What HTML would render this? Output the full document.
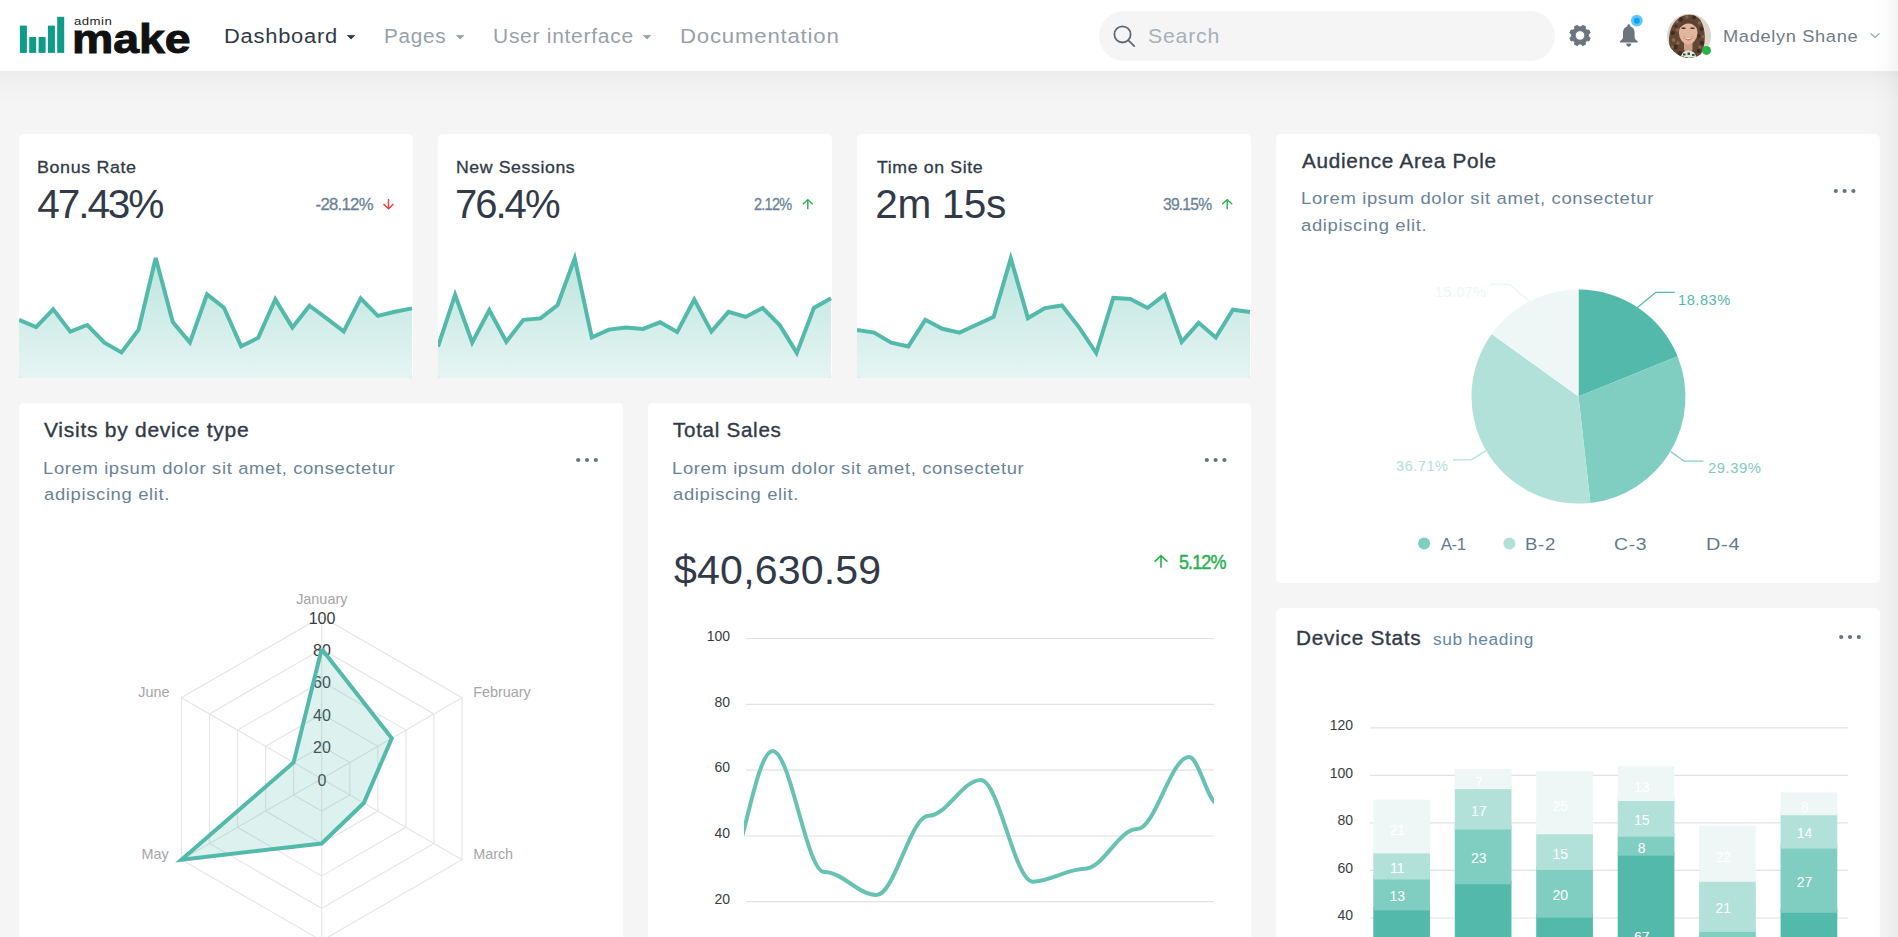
<!DOCTYPE html>
<html lang="en">
<head>
<meta charset="utf-8">
<title>Admin Make - Dashboard</title>
<style>
html,body{margin:0;padding:0;}
html{width:1898px;height:937px;overflow:hidden;}
body{width:1898px;height:937px;overflow:hidden;position:relative;background:#f5f5f5;
  font-family:"Liberation Sans",sans-serif;color:#313a46;}
.t{position:absolute;white-space:nowrap;line-height:1;transform-origin:0 50%;display:block;}
.topbar{position:absolute;left:0;top:0;width:1898px;height:71px;background:#fff;z-index:5;}
.topshadow{position:absolute;left:0;top:71px;width:1898px;height:34px;
  background:linear-gradient(to bottom,rgba(0,0,0,.042),rgba(0,0,0,.014) 38%,rgba(0,0,0,0));}
.edgeshadow{position:absolute;right:0;top:0;width:30px;height:937px;z-index:9;
  background:linear-gradient(to left,rgba(0,0,0,.042),rgba(0,0,0,.013) 45%,rgba(0,0,0,0));}
.card{position:absolute;background:#fff;border-radius:5px;}
.card svg,.topbar svg{position:absolute;left:0;top:0;display:block;}
.search{position:absolute;left:1099px;top:11px;width:456px;height:50px;border-radius:25px;background:#f5f5f5;}
</style>
</head>
<body>
<div class="topshadow"></div>
<header class="topbar">
<svg width="1898" height="71" viewBox="0 0 1898 71">
<rect x="19.9" y="25.6" width="7" height="27.3" fill="#0e9c88"/>
<rect x="29.2" y="37.0" width="7" height="15.9" fill="#0e9c88"/>
<rect x="38.6" y="37.0" width="7" height="15.9" fill="#0e9c88"/>
<rect x="47.9" y="25.6" width="7" height="27.3" fill="#0e9c88"/>
<rect x="57.2" y="16.8" width="7" height="36.1" fill="#0e9c88"/>
<path d="M347.4 35.4h7.4l-3.7 3.6z" fill="#313a46" stroke="#313a46" stroke-width="0.8" stroke-linejoin="round"/>
<path d="M456.5 35.4h7.4l-3.7 3.6z" fill="#98a1a9" stroke="#98a1a9" stroke-width="0.8" stroke-linejoin="round"/>
<path d="M643.3 35.4h7.4l-3.7 3.6z" fill="#98a1a9" stroke="#98a1a9" stroke-width="0.8" stroke-linejoin="round"/>
</svg>
<span class="t" style="left:74.24px;top:16.30px;font-size:11.00px;color:#1c1c1c;letter-spacing:0.385px;transform:scaleX(1.2000);">admin</span>
<span class="t" style="left:72.28px;top:19.30px;font-size:40.60px;color:#111111;font-weight:700;transform:scaleX(1.1434);-webkit-text-stroke:1.0px #111111;">make</span>
<span class="t" style="left:224.25px;top:27.30px;font-size:19.60px;color:#313a46;letter-spacing:0.686px;transform:scaleX(1.1173);">Dashboard</span>
<span class="t" style="left:384.24px;top:27.30px;font-size:19.60px;color:#98a1a9;letter-spacing:0.686px;transform:scaleX(1.0579);">Pages</span>
<span class="t" style="left:493.43px;top:27.30px;font-size:19.60px;color:#98a1a9;letter-spacing:0.686px;transform:scaleX(1.0702);">User interface</span>
<span class="t" style="left:680.42px;top:27.30px;font-size:19.60px;color:#98a1a9;letter-spacing:0.686px;transform:scaleX(1.1337);">Documentation</span>
<div class="search"></div>
<span class="t" style="left:1148.44px;top:26.30px;font-size:20.80px;color:#a7b0b8;letter-spacing:0.728px;transform:scaleX(1.0254);">Search</span>
<span class="t" style="left:1723.24px;top:29.30px;font-size:16.90px;color:#707c87;letter-spacing:0.592px;transform:scaleX(1.0813);">Madelyn Shane</span>
<svg width="1898" height="71" viewBox="0 0 1898 71">
<circle cx="1122.5" cy="34.4" r="8.1" fill="none" stroke="#5d6a74" stroke-width="1.8"/><path d="M1128.4 40.4L1134.3 46.1" stroke="#5d6a74" stroke-width="1.8" stroke-linecap="round"/>
<path d="M1581.29 26.85 L1582.45 25.24 L1585.49 26.50 L1585.17 28.45 L1587.00 30.28 L1588.95 29.96 L1590.21 33.00 L1588.60 34.16 L1588.60 36.74 L1590.21 37.90 L1588.95 40.94 L1587.00 40.62 L1585.17 42.45 L1585.49 44.40 L1582.45 45.66 L1581.29 44.05 L1578.71 44.05 L1577.55 45.66 L1574.51 44.40 L1574.83 42.45 L1573.00 40.62 L1571.05 40.94 L1569.79 37.90 L1571.40 36.74 L1571.40 34.16 L1569.79 33.00 L1571.05 29.96 L1573.00 30.28 L1574.83 28.45 L1574.51 26.50 L1577.55 25.24 L1578.71 26.85Z M1584.75 35.45 a4.75 4.75 0 1 0 -9.5 0 a4.75 4.75 0 1 0 9.5 0Z" fill="#6c757d" fill-rule="evenodd" stroke="#6c757d" stroke-width="0.9" stroke-linejoin="round"/>
<path d="M1628.8 24.3c-.8 0-1.400 .6-1.400 1.400v.5c-2.700 .8-4.400 3.200-4.400 6.200v4.600c0 1.600-1.200 3-3.100 4.300v1.300h17.800v-1.300c-1.900-1.300-3.100-2.700-3.100-4.300v-4.600c0-3-1.700-5.400-4.400-6.200v-.5c0-.8-.6-1.400-1.400-1.400zM1626.200 43.500h5.200c0 1.800-1.200 3.200-2.600 3.200s-2.600-1.400-2.600-3.200z" fill="#6c757d"/>
<circle cx="1636.800" cy="20.700" r="5.900" fill="#5ec6f7"/><circle cx="1636.800" cy="20.700" r="3" fill="#06a5f3"/>
<defs><clipPath id="av"><circle cx="1689.100" cy="35.800" r="22"/></clipPath></defs>
<g clip-path="url(#av)">
<rect x="1666" y="13" width="46" height="46" fill="#ddd6ca"/>
<path d="M1676 59C1670 52 1668.300 44 1669.300 36C1670.300 27 1675 18.500 1684 15.500C1690 13.500 1697 15 1700.500 20C1703.500 25 1704.800 31 1704.800 37C1704.800 44 1703.500 50 1700.500 55L1698 59Z" fill="#634634"/>
<g fill="#3f2c22"><circle cx="1681" cy="19.500" r="2.200"/><circle cx="1694" cy="17.500" r="2"/><circle cx="1672.800" cy="33" r="2"/><circle cx="1675.500" cy="47" r="2.400"/><circle cx="1701.500" cy="29" r="2"/><circle cx="1702" cy="43" r="2.200"/><circle cx="1680" cy="53.500" r="2.200"/><circle cx="1698.500" cy="51" r="2"/><circle cx="1676" cy="26" r="1.600"/><circle cx="1699" cy="36" r="1.600"/></g>
<g fill="#8a634b"><circle cx="1677.500" cy="30" r="1.800"/><circle cx="1673.500" cy="40" r="2"/><circle cx="1687" cy="17" r="1.800"/><circle cx="1699.500" cy="23" r="1.800"/><circle cx="1703" cy="36.500" r="1.600"/><circle cx="1678" cy="43" r="1.800"/><circle cx="1672.500" cy="47" r="1.400"/><circle cx="1700" cy="47" r="1.600"/><circle cx="1677" cy="21.500" r="1.500"/></g>
<path d="M1684 41h8.500v9l-4.200 3-4.300-3z" fill="#cf9f86"/>
<ellipse cx="1688.200" cy="32.200" rx="9.300" ry="12.200" fill="#e2b59d"/>
<path d="M1679 29c.5-5.500 4-9.500 9.500-9.500 5 0 8.500 3.500 9 9.500-2.500-3.500-5.500-5.500-9-5.500-3.500 0-7 2-9.500 5.500z" fill="#5d4233"/>
<path d="M1681.500 28.300h4M1690.500 28.300h4" stroke="#4b362c" stroke-width="1.400"/>
<path d="M1683.600 36.300c3 1.200 6.300 1.200 9.300 0-.8 2.700-2.500 4.200-4.600 4.200s-3.900-1.500-4.700-4.200z" fill="#c9776a"/>
<path d="M1684.500 36.900c2.500 .8 5 .8 7.500 0-.6 1.400-2 2.200-3.700 2.200s-3.200-.8-3.800-2.200z" fill="#f3e6cf"/>
<path d="M1680.500 59c.5-5 3-8.500 7.800-8.500s7.700 3.500 8.700 8.500z" fill="#e9e6da"/>
<path d="M1683 53.500h2.500v2h-2.500zm4.500-1h2.500v2.500h-2.500zm4.500 1.500h2.500v2h-2.500zm-7 3h3v2h-3zm5 .5h3v2h-3zm-8-1h2v2h-2z" fill="#1f5a48"/>
</g>
<circle cx="1706.500" cy="50.400" r="4.500" fill="#27b24a"/>
<path d="M1870.600 33.400l4.400 4.200 4.400-4.200" fill="none" stroke="#8e979f" stroke-width="1.100"/>
</svg>
</header>
<div class="edgeshadow"></div>
<svg width="0" height="0" style="position:absolute"><defs><linearGradient id="ga" x1="0" y1="0" x2="0" y2="1"><stop offset="0" stop-color="#53baab" stop-opacity=".36"/><stop offset="1" stop-color="#53baab" stop-opacity=".12"/></linearGradient></defs></svg>
<section class="card" style="left:19px;top:134px;width:394px;height:244px;">
<svg width="394" height="244" viewBox="19 134 394 244">
<linearGradient id="g19" gradientUnits="userSpaceOnUse" x1="0" y1="258" x2="0" y2="378"><stop offset="0" stop-color="#53baab" stop-opacity=".38"/><stop offset="1" stop-color="#53baab" stop-opacity=".15"/></linearGradient><path d="M19.0 319.9 L36.1 327.1 L53.2 309.3 L70.3 331.6 L87.3 325.0 L104.4 342.7 L121.5 352.5 L138.6 329.6 L155.7 258.0 L172.8 322.0 L189.9 342.6 L207.0 294.4 L224.0 307.8 L241.1 346.3 L258.2 337.8 L275.3 299.4 L292.4 327.4 L309.5 305.7 L326.6 318.4 L343.7 331.4 L360.7 298.3 L377.8 315.9 L394.9 311.7 L412.0 308.4 L412 378 L19 378Z" fill="url(#g19)"/><path d="M19.0 319.9 L36.1 327.1 L53.2 309.3 L70.3 331.6 L87.3 325.0 L104.4 342.7 L121.5 352.5 L138.6 329.6 L155.7 258.0 L172.8 322.0 L189.9 342.6 L207.0 294.4 L224.0 307.8 L241.1 346.3 L258.2 337.8 L275.3 299.4 L292.4 327.4 L309.5 305.7 L326.6 318.4 L343.7 331.4 L360.7 298.3 L377.8 315.9 L394.9 311.7 L412.0 308.4" fill="none" stroke="#53baab" stroke-width="4" stroke-linejoin="miter" stroke-linecap="butt"/>
<path d="M388.5 199.0V208.70000000000002M383.5 204.0L388.5 208.70000000000002L393.5 204.0" fill="none" stroke="#fa3b3b" stroke-width="1.4"/>
</svg>
<span class="t" style="left:17.77px;top:26.30px;font-size:16.90px;color:#313a46;letter-spacing:0.592px;transform:scaleX(1.0584);-webkit-text-stroke:0.3px #313a46;">Bonus Rate</span>
<span class="t" style="left:18.29px;top:50.30px;font-size:40.60px;color:#313a46;letter-spacing:-2.100px;">47.43%</span>
<span class="t" style="left:296.59px;top:63.30px;font-size:16.70px;color:#6b8397;letter-spacing:-0.702px;-webkit-text-stroke:0.3px #6b8397;">-28.12%</span>
</section>
<section class="card" style="left:438px;top:134px;width:394px;height:244px;">
<svg width="394" height="244" viewBox="438 134 394 244">
<linearGradient id="g438" gradientUnits="userSpaceOnUse" x1="0" y1="258" x2="0" y2="378"><stop offset="0" stop-color="#53baab" stop-opacity=".38"/><stop offset="1" stop-color="#53baab" stop-opacity=".15"/></linearGradient><path d="M438.0 346.5 L455.1 294.8 L472.2 342.5 L489.3 310.0 L506.3 341.8 L523.4 319.8 L540.5 318.4 L557.6 305.0 L574.7 258.4 L591.8 337.4 L608.9 329.6 L626.0 327.4 L643.0 328.9 L660.1 322.3 L677.2 332.0 L694.3 299.6 L711.4 331.6 L728.5 311.9 L745.6 316.9 L762.7 308.0 L779.7 325.1 L796.8 352.9 L813.9 308.0 L831.0 298.3 L831 378 L438 378Z" fill="url(#g438)"/><path d="M438.0 346.5 L455.1 294.8 L472.2 342.5 L489.3 310.0 L506.3 341.8 L523.4 319.8 L540.5 318.4 L557.6 305.0 L574.7 258.4 L591.8 337.4 L608.9 329.6 L626.0 327.4 L643.0 328.9 L660.1 322.3 L677.2 332.0 L694.3 299.6 L711.4 331.6 L728.5 311.9 L745.6 316.9 L762.7 308.0 L779.7 325.1 L796.8 352.9 L813.9 308.0 L831.0 298.3" fill="none" stroke="#53baab" stroke-width="4" stroke-linejoin="miter" stroke-linecap="butt"/>
<path d="M807.8 209.3V199.6M802.8 204.3L807.8 199.6L812.8 204.3" fill="none" stroke="#28b14c" stroke-width="1.4"/>
</svg>
<span class="t" style="left:17.89px;top:26.30px;font-size:16.90px;color:#313a46;letter-spacing:0.592px;transform:scaleX(1.0455);-webkit-text-stroke:0.3px #313a46;">New Sessions</span>
<span class="t" style="left:16.90px;top:50.30px;font-size:40.60px;color:#313a46;letter-spacing:-2.030px;transform:scaleX(0.9862);">76.4%</span>
<span class="t" style="left:316.38px;top:63.30px;font-size:16.70px;color:#6b8397;letter-spacing:-0.835px;transform:scaleX(0.8657);-webkit-text-stroke:0.3px #6b8397;">2.12%</span>
</section>
<section class="card" style="left:857px;top:134px;width:394px;height:244px;">
<svg width="394" height="244" viewBox="857 134 394 244">
<linearGradient id="g857" gradientUnits="userSpaceOnUse" x1="0" y1="258" x2="0" y2="378"><stop offset="0" stop-color="#53baab" stop-opacity=".38"/><stop offset="1" stop-color="#53baab" stop-opacity=".15"/></linearGradient><path d="M857.0 330.0 L874.1 332.6 L891.2 342.7 L908.3 346.4 L925.3 319.8 L942.4 328.8 L959.5 332.6 L976.6 324.8 L993.7 316.8 L1010.8 258.4 L1027.9 318.1 L1045.0 308.1 L1062.0 305.5 L1079.1 327.3 L1096.2 353.0 L1113.3 297.9 L1130.4 299.0 L1147.5 308.0 L1164.6 294.8 L1181.7 341.9 L1198.7 322.8 L1215.8 337.5 L1232.9 309.7 L1250.0 312.0 L1250 378 L857 378Z" fill="url(#g857)"/><path d="M857.0 330.0 L874.1 332.6 L891.2 342.7 L908.3 346.4 L925.3 319.8 L942.4 328.8 L959.5 332.6 L976.6 324.8 L993.7 316.8 L1010.8 258.4 L1027.9 318.1 L1045.0 308.1 L1062.0 305.5 L1079.1 327.3 L1096.2 353.0 L1113.3 297.9 L1130.4 299.0 L1147.5 308.0 L1164.6 294.8 L1181.7 341.9 L1198.7 322.8 L1215.8 337.5 L1232.9 309.7 L1250.0 312.0" fill="none" stroke="#53baab" stroke-width="4" stroke-linejoin="miter" stroke-linecap="butt"/>
<path d="M1227.2 209.3V199.6M1222.2 204.3L1227.2 199.6L1232.2 204.3" fill="none" stroke="#28b14c" stroke-width="1.4"/>
</svg>
<span class="t" style="left:19.55px;top:26.30px;font-size:16.90px;color:#313a46;letter-spacing:0.592px;transform:scaleX(1.0485);-webkit-text-stroke:0.3px #313a46;">Time on Site</span>
<span class="t" style="left:18.27px;top:50.30px;font-size:40.60px;color:#313a46;letter-spacing:-0.403px;">2m 15s</span>
<span class="t" style="left:305.91px;top:63.30px;font-size:16.70px;color:#6b8397;letter-spacing:-0.835px;transform:scaleX(0.9362);-webkit-text-stroke:0.3px #6b8397;">39.15%</span>
</section>
<section class="card" style="left:19px;top:403px;width:604px;height:534px;border-radius:5px 5px 0 0;">
<svg width="604" height="534" viewBox="19 403 604 534">
<g fill="none" stroke="#e6e6e6" stroke-width="1.2"><polygon points="321.7,746.3 349.8,762.5 349.8,794.9 321.7,811.1 293.6,794.9 293.6,762.5"/><polygon points="321.7,713.9 377.8,746.3 377.8,811.1 321.7,843.5 265.6,811.1 265.6,746.3"/><polygon points="321.7,681.5 405.9,730.1 405.9,827.3 321.7,875.9 237.5,827.3 237.5,730.1"/><polygon points="321.7,649.1 433.9,713.9 433.9,843.5 321.7,908.3 209.5,843.5 209.5,713.9"/><polygon points="321.7,616.7 462.0,697.7 462.0,859.7 321.7,940.7 181.4,859.7 181.4,697.7"/><path d="M321.7 778.7L321.7 616.7"/><path d="M321.7 778.7L462.0 697.7"/><path d="M321.7 778.7L462.0 859.7"/><path d="M321.7 778.7L321.7 940.7"/><path d="M321.7 778.7L181.4 859.7"/><path d="M321.7 778.7L181.4 697.7"/></g>
<text x="322" y="785.6" font-size="16" fill="#373d3f" text-anchor="middle">0</text><text x="322" y="753.2" font-size="16" fill="#373d3f" text-anchor="middle">20</text><text x="322" y="720.8" font-size="16" fill="#373d3f" text-anchor="middle">40</text><text x="322" y="688.4" font-size="16" fill="#373d3f" text-anchor="middle">60</text><text x="322" y="656.0" font-size="16" fill="#373d3f" text-anchor="middle">80</text><text x="322" y="623.6" font-size="16" fill="#373d3f" text-anchor="middle">100</text>
<polygon points="321.7,649.1 391.8,738.2 363.8,803.0 321.7,843.5 181.4,859.7 293.6,762.5" fill="#53baab" fill-opacity=".2"/><path d="M321.7 649.1 L391.8 738.2 L363.8 803.0 L321.7 843.5 L181.4 859.7 L293.6 762.5 L321.7 649.1" fill="none" stroke="#53baab" stroke-width="4" stroke-linejoin="miter" stroke-linecap="butt"/>
<circle cx="578.2" cy="460" r="2.1" fill="#69737c"/><circle cx="587.0" cy="460" r="2.1" fill="#69737c"/><circle cx="595.8" cy="460" r="2.1" fill="#69737c"/>
</svg>
<span class="t" style="left:25.25px;top:17.30px;font-size:20.20px;color:#313a46;letter-spacing:0.707px;transform:scaleX(1.0407);-webkit-text-stroke:0.35px #313a46;">Visits by device type</span>
<span class="t" style="left:23.83px;top:58.30px;font-size:16.80px;color:#6b8397;letter-spacing:0.588px;transform:scaleX(1.0963);">Lorem ipsum dolor sit amet, consectetur</span>
<span class="t" style="left:24.52px;top:84.30px;font-size:16.80px;color:#6b8397;letter-spacing:0.588px;transform:scaleX(1.0981);">adipiscing elit.</span>
<span class="t" style="left:277.18px;top:189.30px;font-size:14.40px;color:#a5a5a5;">January</span>
<span class="t" style="left:454.15px;top:282.30px;font-size:14.40px;color:#a5a5a5;">February</span>
<span class="t" style="left:454.15px;top:444.30px;font-size:14.40px;color:#a5a5a5;">March</span>
<span class="t" style="left:119.20px;top:282.30px;font-size:14.40px;color:#a5a5a5;">June</span>
<span class="t" style="left:122.58px;top:444.30px;font-size:14.40px;color:#a5a5a5;">May</span>
</section>
<section class="card" style="left:648px;top:403px;width:603px;height:534px;border-radius:5px 5px 0 0;">
<svg width="603" height="534" viewBox="648 403 603 534">
<path d="M746 638.5H1214" stroke="#e2e2e2" stroke-width="1.2"/><path d="M746 704.3H1214" stroke="#e2e2e2" stroke-width="1.2"/><path d="M746 770.1H1214" stroke="#e2e2e2" stroke-width="1.2"/><path d="M746 836.0H1214" stroke="#e2e2e2" stroke-width="1.2"/><path d="M746 901.7H1214" stroke="#e2e2e2" stroke-width="1.2"/>
<defs><clipPath id="cl"><rect x="744" y="620" width="470" height="300"/></clipPath></defs><path d="M720.4 887.8 C738.7 887.8 754.3 751.0 772.6 751.0 C790.7 751.0 806.3 872.0 824.4 872.0 C842.6 872.0 858.3 895.0 876.5 895.0 C894.7 895.0 910.4 815.8 928.6 815.8 C946.8 815.8 962.5 779.9 980.7 779.9 C998.9 779.9 1014.6 881.7 1032.8 881.7 C1051.0 881.7 1066.7 868.7 1084.9 868.7 C1103.1 868.7 1118.8 829.1 1137.0 829.1 C1155.2 829.1 1170.8 757.0 1189.0 757.0 C1199.2 757.0 1207.8 804.0 1218.0 804.0" fill="none" stroke="#67c2b4" stroke-width="4" clip-path="url(#cl)"/>
<circle cx="1206.8" cy="460" r="2.1" fill="#69737c"/><circle cx="1215.6" cy="460" r="2.1" fill="#69737c"/><circle cx="1224.4" cy="460" r="2.1" fill="#69737c"/>
<path d="M1161.0 567.8V555.6M1154.6 561.6999999999999L1161.0 555.6L1167.4 561.6999999999999" fill="none" stroke="#28b14c" stroke-width="1.6"/>
</svg>
<span class="t" style="left:24.89px;top:17.30px;font-size:20.20px;color:#313a46;letter-spacing:0.707px;transform:scaleX(1.0192);-webkit-text-stroke:0.35px #313a46;">Total Sales</span>
<span class="t" style="left:23.83px;top:58.30px;font-size:16.80px;color:#6b8397;letter-spacing:0.588px;transform:scaleX(1.0963);">Lorem ipsum dolor sit amet, consectetur</span>
<span class="t" style="left:24.52px;top:84.30px;font-size:16.80px;color:#6b8397;letter-spacing:0.588px;transform:scaleX(1.0981);">adipiscing elit.</span>
<span class="t" style="left:26.09px;top:147.30px;font-size:41.10px;color:#313a46;letter-spacing:0.162px;">$40,630.59</span>
<span class="t" style="left:531.28px;top:149.30px;font-size:20.40px;color:#28b14c;letter-spacing:-1.020px;transform:scaleX(0.8819);-webkit-text-stroke:0.45px #28b14c;">5.12%</span>
<span class="t" style="left:58.78px;top:226.30px;font-size:14.00px;color:#373d3f;">100</span>
<span class="t" style="left:66.59px;top:292.30px;font-size:14.00px;color:#373d3f;">80</span>
<span class="t" style="left:66.58px;top:357.30px;font-size:14.00px;color:#373d3f;">60</span>
<span class="t" style="left:66.58px;top:423.30px;font-size:14.00px;color:#373d3f;">40</span>
<span class="t" style="left:66.58px;top:489.30px;font-size:14.00px;color:#373d3f;">20</span>
</section>
<section class="card" style="left:1276px;top:134px;width:604px;height:449px;">
<svg width="604" height="449" viewBox="1276 134 604 449">
<path d="M1578.5 396.6L1578.50 289.60A107.0 107.0 0 0 1 1677.56 356.15Z" fill="#53baab"/><path d="M1578.5 396.6L1677.56 356.15A107.0 107.0 0 0 1 1590.44 502.93Z" fill="#80cdc1"/><path d="M1578.5 396.6L1590.44 502.93A107.0 107.0 0 0 1 1491.66 334.09Z" fill="#b2e1da"/><path d="M1578.5 396.6L1491.66 334.09A107.0 107.0 0 0 1 1578.50 289.60Z" fill="#eef7f5"/>
<path d="M1637.4 307.4L1655.9 292.3L1674.8 292.3" fill="none" stroke="#53baab" stroke-width="1.3"/><path d="M1670.8 451.6L1684.2 461.2L1703.5 461.2" fill="none" stroke="#80cdc1" stroke-width="1.3"/><path d="M1485.7 450.9L1471.3 459.9L1453.0 459.9" fill="none" stroke="#b2e1da" stroke-width="1.3"/><path d="M1528.9 301.1L1509.7 284.4L1490.5 284.4" fill="none" stroke="#eef7f5" stroke-width="1.3"/>
<circle cx="1424.1" cy="543.5" r="6" fill="#80cdc1"/><circle cx="1509.4" cy="543.5" r="6" fill="#b2e1da"/>
<circle cx="1835.8" cy="191" r="2.1" fill="#69737c"/><circle cx="1844.6" cy="191" r="2.1" fill="#69737c"/><circle cx="1853.4" cy="191" r="2.1" fill="#69737c"/>
</svg>
<span class="t" style="left:26.20px;top:17.30px;font-size:20.20px;color:#313a46;letter-spacing:0.707px;transform:scaleX(1.0251);-webkit-text-stroke:0.35px #313a46;">Audience Area Pole</span>
<span class="t" style="left:24.52px;top:57.30px;font-size:16.80px;color:#6b8397;letter-spacing:0.588px;transform:scaleX(1.0982);">Lorem ipsum dolor sit amet, consectetur</span>
<span class="t" style="left:25.21px;top:84.30px;font-size:16.80px;color:#6b8397;letter-spacing:0.588px;transform:scaleX(1.0999);">adipiscing elit.</span>
<span class="t" style="left:402.30px;top:159.30px;font-size:14.00px;color:#53baab;letter-spacing:0.490px;transform:scaleX(1.0453);">18.83%</span>
<span class="t" style="left:431.56px;top:327.30px;font-size:14.00px;color:#80cdc1;letter-spacing:0.490px;transform:scaleX(1.0584);">29.39%</span>
<span class="t" style="left:120.35px;top:325.30px;font-size:14.00px;color:#b2e1da;letter-spacing:0.490px;transform:scaleX(1.0423);">36.71%</span>
<span class="t" style="left:158.93px;top:151.30px;font-size:14.00px;color:#eef7f5;letter-spacing:0.490px;transform:scaleX(1.0226);">15.07%</span>
<span class="t" style="left:164.80px;top:402.30px;font-size:17.00px;color:#5f7a8e;letter-spacing:-0.514px;">A-1</span>
<span class="t" style="left:248.61px;top:402.30px;font-size:17.00px;color:#5f7a8e;letter-spacing:0.595px;transform:scaleX(1.0959);">B-2</span>
<span class="t" style="left:338.33px;top:402.30px;font-size:17.00px;color:#5f7a8e;letter-spacing:0.595px;transform:scaleX(1.1376);">C-3</span>
<span class="t" style="left:429.71px;top:402.30px;font-size:17.00px;color:#5f7a8e;letter-spacing:0.595px;transform:scaleX(1.1709);">D-4</span>
</section>
<section class="card" style="left:1276px;top:608px;width:604px;height:329px;border-radius:5px 5px 0 0;">
<svg width="604" height="329" viewBox="1276 608 604 329">
<path d="M1370 727.8H1848" stroke="#e2e2e2" stroke-width="1.2"/><path d="M1370 775.3H1848" stroke="#e2e2e2" stroke-width="1.2"/><path d="M1370 822.9H1848" stroke="#e2e2e2" stroke-width="1.2"/><path d="M1370 870.4H1848" stroke="#e2e2e2" stroke-width="1.2"/><path d="M1370 918.0H1848" stroke="#e2e2e2" stroke-width="1.2"/>
<rect x="1373.3" y="906.6" width="56.7" height="108.5" fill="#53baab"/><rect x="1373.3" y="875.7" width="56.7" height="34.7" fill="#80cdc1"/><rect x="1373.3" y="849.5" width="56.7" height="30.0" fill="#b2e1da"/><rect x="1373.3" y="799.6" width="56.7" height="53.8" fill="#eef7f5"/><rect x="1454.8" y="880.5" width="56.7" height="134.6" fill="#53baab"/><rect x="1454.8" y="825.7" width="56.7" height="58.5" fill="#80cdc1"/><rect x="1454.8" y="785.3" width="56.7" height="44.2" fill="#b2e1da"/><rect x="1454.8" y="768.6" width="56.7" height="20.5" fill="#eef7f5"/><rect x="1536.2" y="913.8" width="56.7" height="101.3" fill="#53baab"/><rect x="1536.2" y="866.2" width="56.7" height="51.4" fill="#80cdc1"/><rect x="1536.2" y="830.5" width="56.7" height="39.5" fill="#b2e1da"/><rect x="1536.2" y="771.0" width="56.7" height="63.3" fill="#eef7f5"/><rect x="1617.7" y="851.9" width="56.7" height="163.2" fill="#53baab"/><rect x="1617.7" y="832.9" width="56.7" height="22.8" fill="#80cdc1"/><rect x="1617.7" y="797.2" width="56.7" height="39.5" fill="#b2e1da"/><rect x="1617.7" y="766.3" width="56.7" height="34.7" fill="#eef7f5"/><rect x="1699.1" y="959.0" width="56.7" height="56.1" fill="#53baab"/><rect x="1699.1" y="928.0" width="56.7" height="34.7" fill="#80cdc1"/><rect x="1699.1" y="878.1" width="56.7" height="53.8" fill="#b2e1da"/><rect x="1699.1" y="825.7" width="56.7" height="56.1" fill="#eef7f5"/><rect x="1780.6" y="909.0" width="56.7" height="106.1" fill="#53baab"/><rect x="1780.6" y="844.8" width="56.7" height="68.0" fill="#80cdc1"/><rect x="1780.6" y="811.5" width="56.7" height="37.1" fill="#b2e1da"/><rect x="1780.6" y="792.4" width="56.7" height="22.8" fill="#eef7f5"/>
<text x="1397.3" y="901.4" font-size="14" fill="#ffffff" text-anchor="middle">13</text><text x="1397.3" y="872.8" font-size="14" fill="#ffffff" text-anchor="middle">11</text><text x="1397.3" y="834.7" font-size="14" fill="#ffffff" text-anchor="middle">21</text><text x="1478.8" y="863.3" font-size="14" fill="#ffffff" text-anchor="middle">23</text><text x="1478.8" y="815.7" font-size="14" fill="#ffffff" text-anchor="middle">17</text><text x="1478.8" y="787.2" font-size="14" fill="#ffffff" text-anchor="middle">7</text><text x="1560.3" y="900.2" font-size="14" fill="#ffffff" text-anchor="middle">20</text><text x="1560.3" y="858.5" font-size="14" fill="#ffffff" text-anchor="middle">15</text><text x="1560.3" y="811.0" font-size="14" fill="#ffffff" text-anchor="middle">25</text><text x="1641.7" y="941.8" font-size="14" fill="#ffffff" text-anchor="middle">67</text><text x="1641.7" y="852.6" font-size="14" fill="#ffffff" text-anchor="middle">8</text><text x="1641.7" y="825.2" font-size="14" fill="#ffffff" text-anchor="middle">15</text><text x="1641.7" y="791.9" font-size="14" fill="#ffffff" text-anchor="middle">13</text><text x="1723.2" y="953.7" font-size="14" fill="#ffffff" text-anchor="middle">13</text><text x="1723.2" y="913.3" font-size="14" fill="#ffffff" text-anchor="middle">21</text><text x="1723.2" y="862.1" font-size="14" fill="#ffffff" text-anchor="middle">22</text><text x="1804.6" y="887.1" font-size="14" fill="#ffffff" text-anchor="middle">27</text><text x="1804.6" y="838.3" font-size="14" fill="#ffffff" text-anchor="middle">14</text><text x="1804.6" y="812.1" font-size="14" fill="#ffffff" text-anchor="middle">8</text>
<circle cx="1841.2" cy="637" r="2.1" fill="#69737c"/><circle cx="1850.0" cy="637" r="2.1" fill="#69737c"/><circle cx="1858.8" cy="637" r="2.1" fill="#69737c"/>
</svg>
<span class="t" style="left:19.64px;top:20.30px;font-size:20.20px;color:#313a46;letter-spacing:0.707px;transform:scaleX(1.0301);-webkit-text-stroke:0.35px #313a46;">Device Stats</span>
<span class="t" style="left:157.12px;top:24.30px;font-size:15.60px;color:#6287a5;letter-spacing:0.546px;transform:scaleX(1.1085);">sub heading</span>
<span class="t" style="left:53.78px;top:110.30px;font-size:14.00px;color:#373d3f;">120</span>
<span class="t" style="left:53.78px;top:158.30px;font-size:14.00px;color:#373d3f;">100</span>
<span class="t" style="left:61.58px;top:205.30px;font-size:14.00px;color:#373d3f;">80</span>
<span class="t" style="left:61.58px;top:253.30px;font-size:14.00px;color:#373d3f;">60</span>
<span class="t" style="left:61.58px;top:300.30px;font-size:14.00px;color:#373d3f;">40</span>
</section>
</body>
</html>
